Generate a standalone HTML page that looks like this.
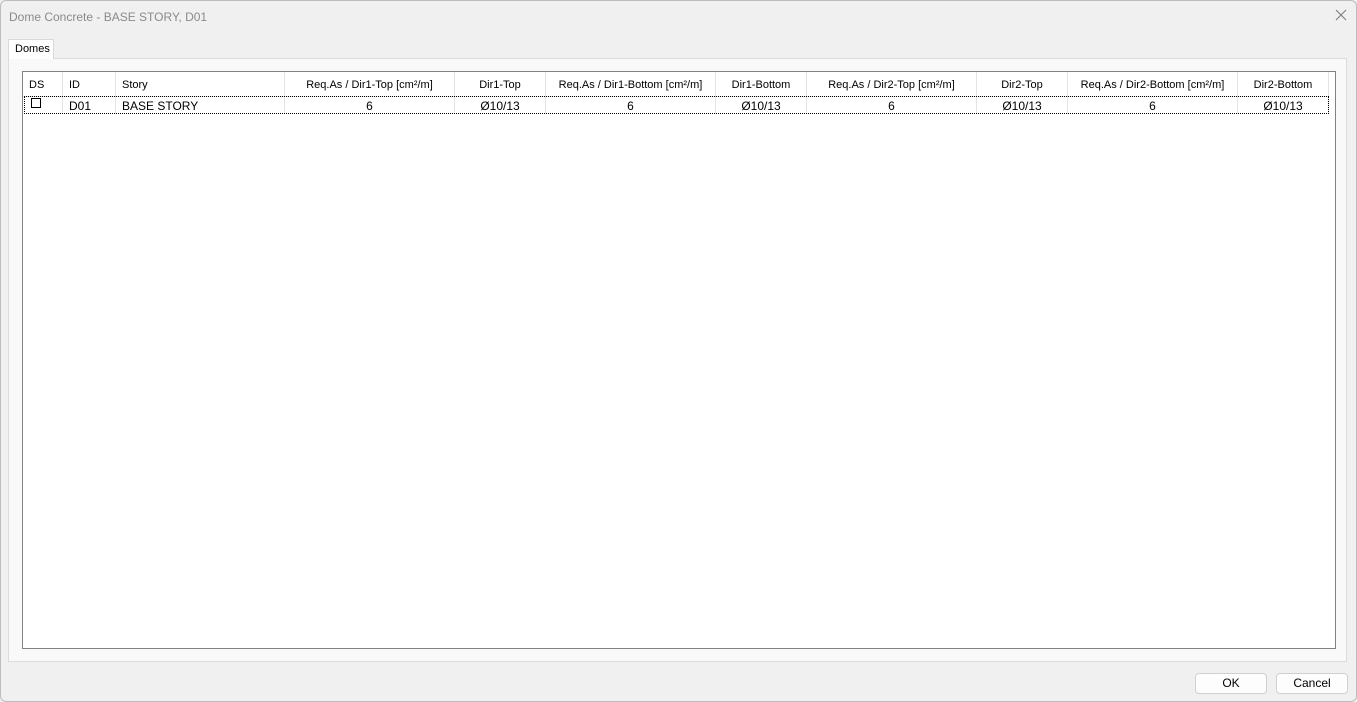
<!DOCTYPE html>
<html><head><meta charset="utf-8"><style>
*{box-sizing:border-box;margin:0;padding:0}
body{width:1357px;height:702px;background:#f0f0f0;font-family:"Liberation Sans",sans-serif;font-size:11px;color:#000;position:relative;overflow:hidden}
.win{position:absolute;left:0;top:0;width:1357px;height:702px;box-shadow:inset 0 0 0 1px #bdbdbd;border-radius:6px;background:#f0f0f0}
.title{position:absolute;left:9px;top:10px;font-size:12px;color:#8a8a8a}
.close{position:absolute;left:1335px;top:9px}
.tab{position:absolute;left:8px;top:39px;width:46px;height:20px;background:#fff;border:1px solid #d9d9d9;border-bottom:none;font-size:11px;padding:3px 0 0 6px;z-index:2}
.panel{position:absolute;left:8px;top:58px;width:1339px;height:604px;background:#f9f9f9;border:1px solid #dcdcdc}
.grid{position:absolute;left:22px;top:71px;width:1314px;height:578px;background:#fff;border:1px solid #828282}
.c{position:absolute;height:25px;line-height:27px;border-right:1px solid #e3e3e3;border-bottom:1px solid #e3e3e3;text-align:center;font-size:11px;white-space:nowrap}
.d{position:absolute;top:25px;height:17px;line-height:19px;border-right:1px solid #e3e3e3;text-align:center;font-size:12px;white-space:nowrap}
.l{text-align:left;padding-left:6px}
.row{position:absolute;left:1px;top:24px;width:1305px;height:18px;border:1px dotted #000;pointer-events:none}
.chk{position:absolute;left:8px;top:1px;width:10px;height:10px;border:1px solid #000}
.btn{position:absolute;top:673px;width:72px;height:21px;background:#fdfdfd;border:1px solid #d0d0d0;border-radius:4px;text-align:center;line-height:19px;font-size:12px}
</style></head><body>
<div class="win">
<div class="title">Dome Concrete - BASE STORY, D01</div>
<svg class="close" width="12" height="12" viewBox="0 0 12 12"><path d="M1 1L11 11M11 1L1 11" stroke="#777" stroke-width="1"/></svg>
<div class="panel"></div>
<div class="tab">Domes</div>
<div class="grid">
<div class="c" style="left:0;width:40px;text-align:left;padding-left:6px">DS</div>
<div class="c l" style="left:40px;width:53px">ID</div>
<div class="c l" style="left:93px;width:169px">Story</div>
<div class="c" style="left:262px;width:170px">Req.As / Dir1-Top [cm²/m]</div>
<div class="c" style="left:432px;width:91px">Dir1-Top</div>
<div class="c" style="left:523px;width:170px">Req.As / Dir1-Bottom [cm²/m]</div>
<div class="c" style="left:693px;width:91px">Dir1-Bottom</div>
<div class="c" style="left:784px;width:170px">Req.As / Dir2-Top [cm²/m]</div>
<div class="c" style="left:954px;width:91px">Dir2-Top</div>
<div class="c" style="left:1045px;width:170px">Req.As / Dir2-Bottom [cm²/m]</div>
<div class="c" style="left:1215px;width:91px">Dir2-Bottom</div>

<div class="d" style="left:0;width:40px"><div class="chk"></div></div>
<div class="d l" style="left:40px;width:53px">D01</div>
<div class="d l" style="left:93px;width:169px">BASE STORY</div>
<div class="d" style="left:262px;width:170px">6</div>
<div class="d" style="left:432px;width:91px">Ø10/13</div>
<div class="d" style="left:523px;width:170px">6</div>
<div class="d" style="left:693px;width:91px">Ø10/13</div>
<div class="d" style="left:784px;width:170px">6</div>
<div class="d" style="left:954px;width:91px">Ø10/13</div>
<div class="d" style="left:1045px;width:170px">6</div>
<div class="d" style="left:1215px;width:91px">Ø10/13</div>
<div class="row"></div>
</div>
<div class="btn" style="left:1195px">OK</div>
<div class="btn" style="left:1276px">Cancel</div>
</div>
</body></html>
